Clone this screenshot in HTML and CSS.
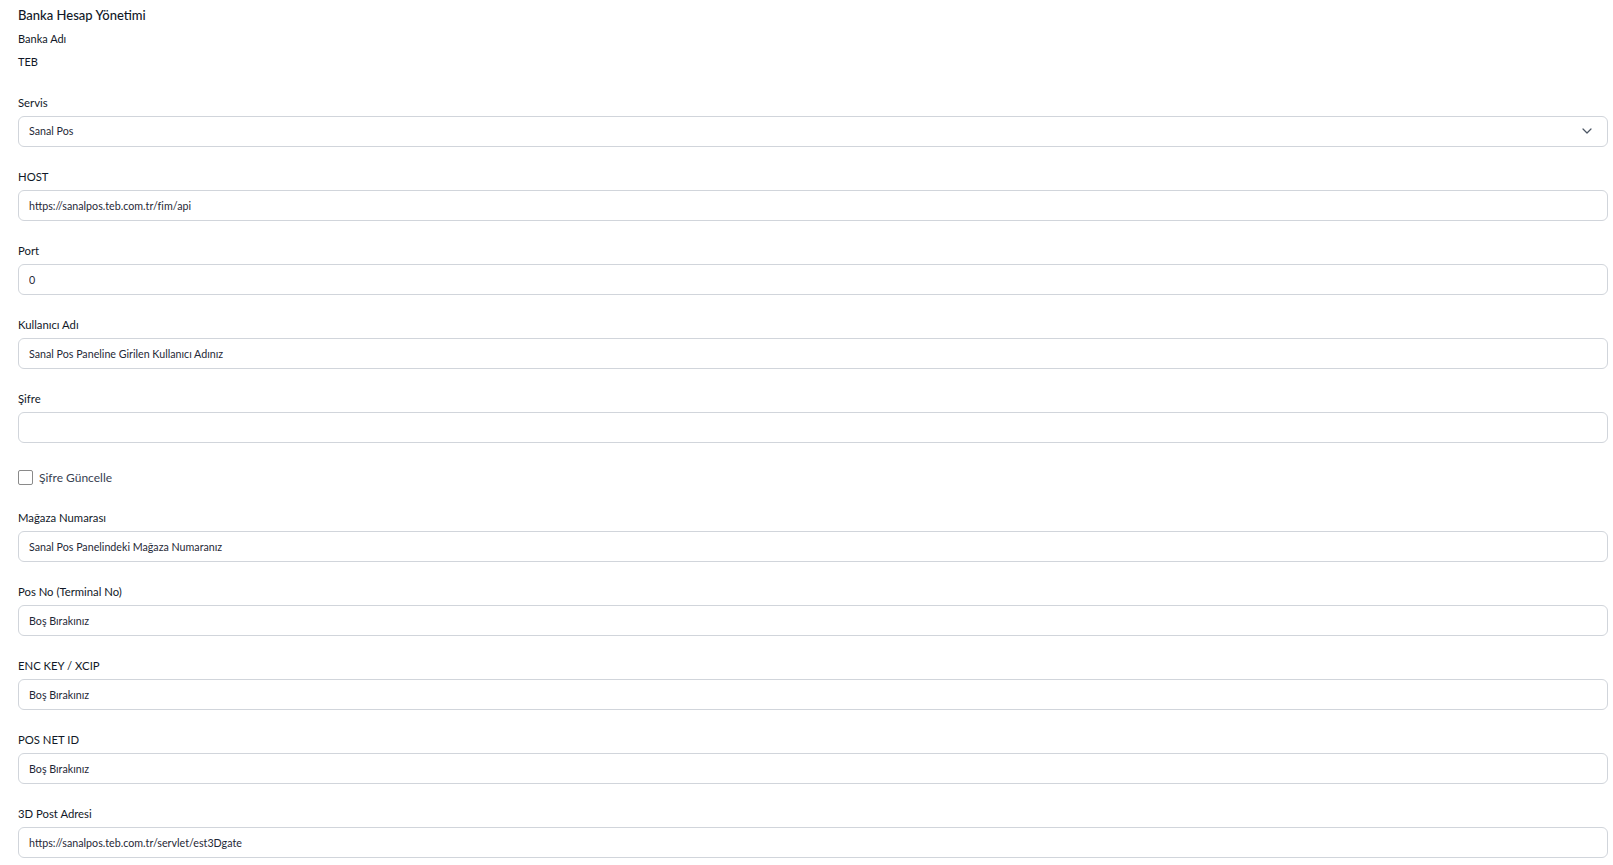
FILE: index.html
```html
<!DOCTYPE html>
<html lang="tr">
<head>
  <meta charset="UTF-8" />
  <meta name="viewport" content="width=device-width, initial-scale=1.0"/>
  <title>Banka Hesap Yönetimi</title>
  <link rel="stylesheet" href="styles.css">
</head>
<body>

  <h1 class="page-title">Banka Hesap Yönetimi</h1>
  <div class="info-label">Banka Adı</div>
  <div class="info-value">TEB</div>

  <form class="bank-form">
    <div class="field">
      <label for="service">Servis</label>
      <div class="select-wrap">
        <select id="service">
          <option>Sanal Pos</option>
        </select>
        <svg class="chevron" width="10" height="6" viewBox="0 0 10 6">
          <path d="M1 1l4 4 4-4" fill="none" stroke="#4b5563" stroke-width="1.2" stroke-linecap="round" stroke-linejoin="round"/>
        </svg>
      </div>
    </div>

    <div class="field">
      <label for="host">HOST</label>
      <input type="text" id="host" value="https://sanalpos.teb.com.tr/fim/api" />
    </div>

    <div class="field">
      <label for="port">Port</label>
      <input type="text" id="port" value="0" />
    </div>

    <div class="field">
      <label for="username">Kullanıcı Adı</label>
      <input type="text" id="username" value="Sanal Pos Paneline Girilen Kullanıcı Adınız" />
    </div>

    <div class="field">
      <label for="password">Şifre</label>
      <input type="password" id="password" />
    </div>

    <label class="check-row">
      <input type="checkbox" id="updatePassword" />
      <span>Şifre Güncelle</span>
    </label>

    <div class="field">
      <label for="storeNo">Mağaza Numarası</label>
      <input type="text" id="storeNo" value="Sanal Pos Panelindeki Mağaza Numaranız" />
    </div>

    <div class="field">
      <label for="posNo">Pos No (Terminal No)</label>
      <input type="text" id="posNo" value="Boş Bırakınız" />
    </div>

    <div class="field">
      <label for="encKey">ENC KEY / XCIP</label>
      <input type="text" id="encKey" value="Boş Bırakınız" />
    </div>

    <div class="field">
      <label for="posNetId">POS NET ID</label>
      <input type="text" id="posNetId" value="Boş Bırakınız" />
    </div>

    <div class="field">
      <label for="postUrl">3D Post Adresi</label>
      <input type="text" id="postUrl" value="https://sanalpos.teb.com.tr/servlet/est3Dgate" />
    </div>
  </form>

</body>
</html>
```

FILE: styles.css
```css
body {
  font-family: Lato, 'Noto Sans', sans-serif;
  margin: 0;
  padding: 6px 5px 0 18px;
  background: #fff;
  color: #1f2937;
}

.page-title {
  margin: 0;
  font-size: 13px;
  font-weight: 500;
  line-height: 18px;
  color: #111827;
}

.info-label,
.info-value {
  font-size: 11px;
  line-height: 16px;
  color: #111827;
}

.info-label {
  margin-top: 7px;
}

.info-value {
  margin-top: 7px;
}

.bank-form {
  margin-top: 25px;
}

.field {
  margin-bottom: 22px;
}

.field label {
  display: block;
  font-size: 11.3px;
  line-height: 16px;
  margin-bottom: 5px;
  color: #111827;
}

.field input,
.field select {
  display: block;
  box-sizing: border-box;
  width: 100%;
  height: 31px;
  margin: 0;
  padding: 0 10px;
  border: 1px solid #d1d5db;
  border-radius: 6px;
  background: #fff;
  font-family: inherit;
  font-size: 10.7px;
  color: #1f2937;
  outline: none;
}

.select-wrap {
  position: relative;
}

.field select {
  appearance: none;
  -webkit-appearance: none;
  padding-bottom: 2px;
}

.chevron {
  position: absolute;
  right: 16px;
  top: 12px;
  pointer-events: none;
}

.check-row {
  display: flex;
  align-items: center;
  gap: 6px;
  margin-top: 26px;
  margin-bottom: 25px;
  height: 16px;
  font-size: 12px;
  color: #374151;
}

.check-row input {
  appearance: none;
  -webkit-appearance: none;
  width: 15px;
  height: 15px;
  margin: 0;
  border: 1px solid #8a8a8a;
  border-radius: 2px;
  background: #fff;
}
```
